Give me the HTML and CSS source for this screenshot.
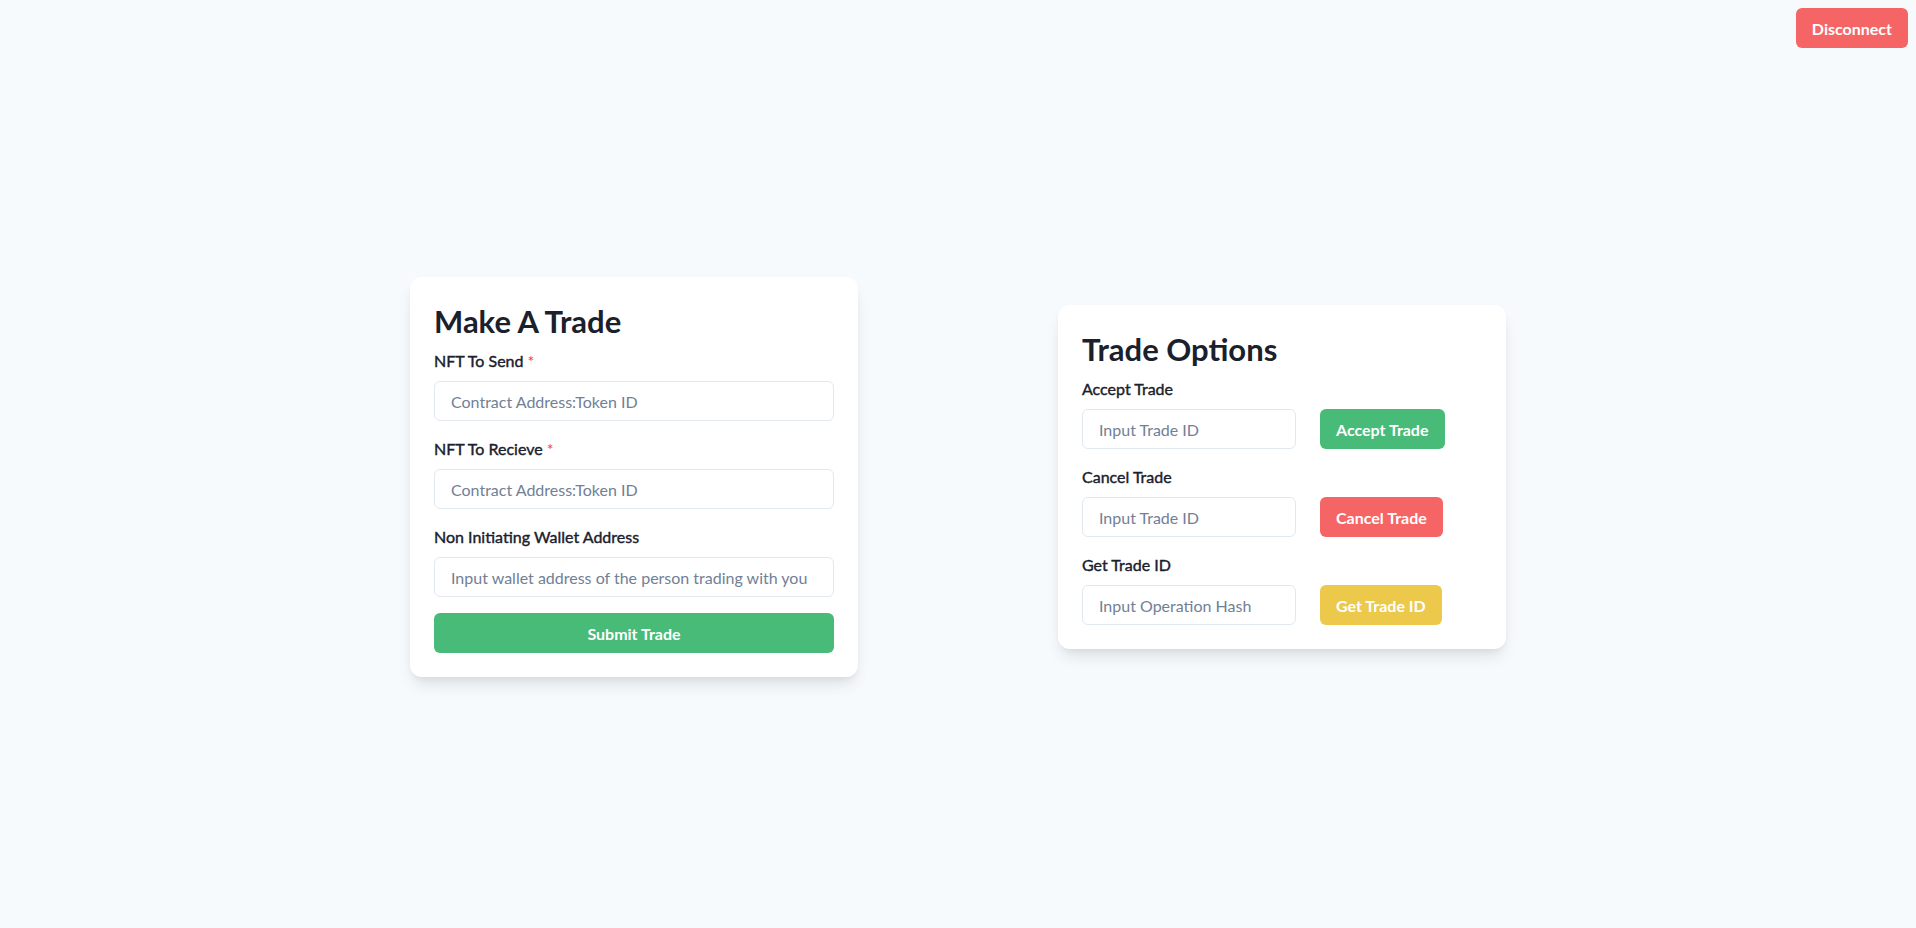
FILE: index.html
```html
<!DOCTYPE html>
<html lang="en">
<head>
<meta charset="utf-8">
<title>NFT Trade</title>
<link rel="stylesheet" href="styles.css">
</head>
<body>
<header class="topbar">
  <button class="btn btn-red">Disconnect</button>
</header>
<main class="main">
  <div class="cards">
    <section class="card">
      <h2 class="card-title">Make A Trade</h2>
      <div class="field">
        <label class="label">NFT To Send <span class="req">*</span></label>
        <input class="input" type="text" placeholder="Contract Address:Token ID">
      </div>
      <div class="field">
        <label class="label">NFT To Recieve <span class="req">*</span></label>
        <input class="input" type="text" placeholder="Contract Address:Token ID">
      </div>
      <div class="field">
        <label class="label">Non Initiating Wallet Address</label>
        <input class="input" type="text" placeholder="Input wallet address of the person trading with you">
      </div>
      <button class="btn btn-green btn-full">Submit Trade</button>
    </section>

    <section class="card">
      <h2 class="card-title">Trade Options</h2>
      <div class="field">
        <label class="label">Accept Trade</label>
        <div class="row">
          <input class="input input-short" type="text" placeholder="Input Trade ID">
          <button class="btn btn-green">Accept Trade</button>
        </div>
      </div>
      <div class="field">
        <label class="label">Cancel Trade</label>
        <div class="row">
          <input class="input input-short" type="text" placeholder="Input Trade ID">
          <button class="btn btn-red">Cancel Trade</button>
        </div>
      </div>
      <div class="field">
        <label class="label">Get Trade ID</label>
        <div class="row">
          <input class="input input-short" type="text" placeholder="Input Operation Hash">
          <button class="btn btn-yellow">Get Trade ID</button>
        </div>
      </div>
    </section>
  </div>
</main>
</body>
</html>
```

FILE: styles.css
```css
* { box-sizing: border-box; }

html, body {
  margin: 0;
  padding: 0;
}

body {
  background: #f7fafc;
  color: #1a202c;
  font-family: "Lato", "Open Sans", sans-serif;
  font-size: 16px;
  line-height: 1.5;
}

.topbar {
  position: fixed;
  top: 8px;
  right: 8px;
}

.main {
  height: 100vh;
  padding-top: 26px;
  display: flex;
  align-items: center;
  justify-content: center;
}

.cards {
  display: flex;
  align-items: center;
  gap: 200px;
}

.card {
  width: 448px;
  background: #ffffff;
  border-radius: 12px;
  padding: 24px;
  box-shadow: 0 10px 15px -3px rgba(0, 0, 0, 0.1), 0 4px 6px -2px rgba(0, 0, 0, 0.05);
  display: flex;
  flex-direction: column;
  gap: 16px;
}

.card-title {
  margin: 0 0 -8px 0;
  font-size: 31px;
  line-height: 40px;
  font-weight: 700;
  color: #1a202c;
}

.field {
  display: flex;
  flex-direction: column;
}

.label {
  font-size: 16px;
  font-weight: 400;
  -webkit-text-stroke: 0.4px #1a202c;
  line-height: 24px;
  margin-bottom: 8px;
  color: #1a202c;
}

.req {
  color: #e53e3e;
  -webkit-text-stroke: 0;
}

.input {
  height: 40px;
  width: 100%;
  padding: 0 16px;
  border: 1px solid #e2e8f0;
  border-radius: 6px;
  background: #fff;
  font-family: inherit;
  font-size: 16px;
  color: #1a202c;
  outline: none;
}

.input::placeholder {
  color: #718096;
  opacity: 1;
}

.row {
  display: flex;
  align-items: center;
  gap: 24px;
}

.input-short {
  width: 214px;
}

.btn {
  height: 40px;
  padding: 0 16px;
  border: none;
  border-radius: 6px;
  font-family: inherit;
  font-size: 16px;
  font-weight: 700;
  color: #ffffff;
  cursor: pointer;
  white-space: nowrap;
}

.btn-full { width: 100%; }
.btn-green { background: #48bb78; }
.btn-red { background: #f56565; }
.btn-yellow { background: #ecc94b; }
```
